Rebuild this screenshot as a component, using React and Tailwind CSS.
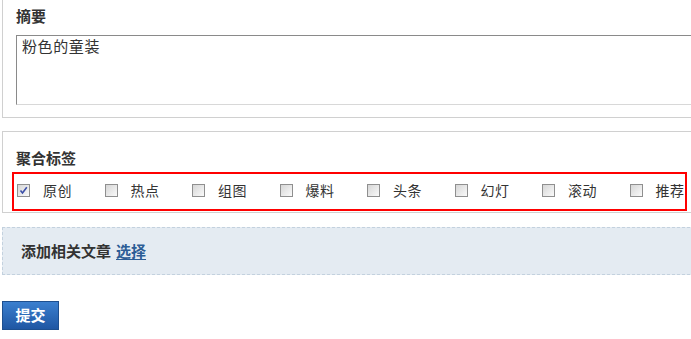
import React, { useState } from 'react';

const tags = ['原创', '热点', '组图', '爆料', '头条', '幻灯', '滚动', '推荐'];

function Box({ checked, onToggle }) {
    return (
        <span
            onClick={onToggle}
            className="relative block w-[13px] h-[13px] shrink-0 border border-[#8f8f8f] bg-gradient-to-br from-[#d6d6d6] to-[#fafafa] cursor-pointer"
        >
            {checked && (
                <svg viewBox="0 0 11 11" className="absolute inset-0 w-[11px] h-[11px]">
                    <path d="M2.5 5.5 L4.5 8 L8.8 2.2" stroke="#3b4fa8" strokeWidth="1.6" fill="none" />
                </svg>
            )}
        </span>
    );
}

export default function App() {
    const [checked, setChecked] = useState({ 原创: true });

    return (
        <div className="w-[691px] h-[339px] overflow-hidden bg-white text-[#333] font-['Microsoft_YaHei','Noto_Sans_CJK_SC',sans-serif]">
            <div className="w-[760px]">
                {/* 摘要 */}
                <div className="ml-[2px] border-x border-b border-[#d0d0d0] pl-[13px] pt-[5px] pb-[12px]">
                    <div className="text-[15px] leading-[22px] font-bold">摘要</div>
                    <textarea
                        defaultValue="粉色的童装"
                        className="mt-[8px] block w-[720px] h-[70px] border border-t-[#8a8a8a] border-l-[#8a8a8a] border-r-[#d8d8d8] border-b-[#d8d8d8] px-[5px] pt-[1px] text-[15px] leading-[18px] tracking-[0.6px] resize-none outline-none"
                    />
                </div>

                {/* 聚合标签 */}
                <div className="mt-[13px] ml-[2px] border border-r-0 border-[#d0d0d0] pl-[9px] pt-[15px] pb-[1px]">
                    <div className="pl-[4px] text-[15px] leading-[22px] font-bold">聚合标签</div>
                    <div className="mt-[3px] w-[675px] h-[39px] border-2 border-[#ff0000] flex items-center pl-[3px] pb-[3px] overflow-hidden">
                        {tags.map((t) => (
                            <label key={t} className="w-[87.5px] shrink-0 flex items-center text-[14px] leading-[20px] tracking-[0.5px]">
                                <Box
                                    checked={!!checked[t]}
                                    onToggle={() => setChecked({ ...checked, [t]: !checked[t] })}
                                />
                                <span className="ml-[13px] whitespace-nowrap">{t}</span>
                            </label>
                        ))}
                    </div>
                </div>

                {/* 相关文章 */}
                <div className="mt-[14px] ml-[2px] h-[48px] border border-dashed border-[#c3d1de] bg-[#e4ebf2] flex items-center pl-[18px] text-[15px] font-bold">
                    添加相关文章
                    <a href="#" className="ml-[5px] text-[#2c5d96] underline underline-offset-2">选择</a>
                </div>

                <button className="mt-[26px] ml-[2px] w-[57px] h-[29px] border border-[#1d4f8f] bg-gradient-to-b from-[#3b7fcf] to-[#1f57a3] text-white text-[15px] font-bold">
                    提交
                </button>
            </div>
        </div>
    );
}
